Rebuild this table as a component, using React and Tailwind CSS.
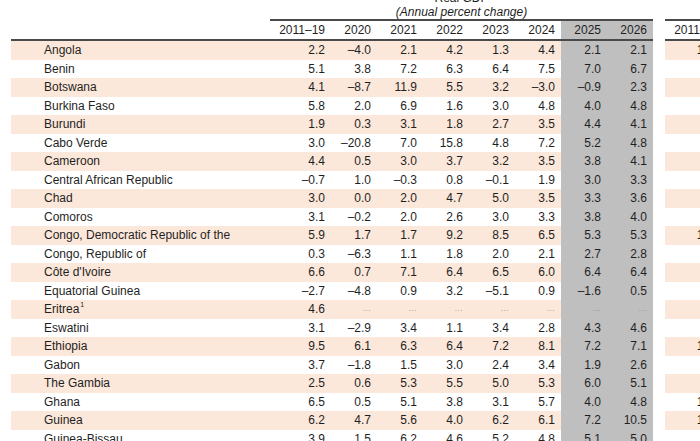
import React from "react";

const rows = [
  ["Angola", ["2.2", "–4.0", "2.1", "4.2", "1.3", "4.4", "2.1", "2.1"], "17.1"],
  ["Benin", ["5.1", "3.8", "7.2", "6.3", "6.4", "7.5", "7.0", "6.7"], "0.8"],
  ["Botswana", ["4.1", "–8.7", "11.9", "5.5", "3.2", "–3.0", "–0.9", "2.3"], "5.2"],
  ["Burkina Faso", ["5.8", "2.0", "6.9", "1.6", "3.0", "4.8", "4.0", "4.8"], "1.0"],
  ["Burundi", ["1.9", "0.3", "3.1", "1.8", "2.7", "3.5", "4.4", "4.1"], "8.3"],
  ["Cabo Verde", ["3.0", "–20.8", "7.0", "15.8", "4.8", "7.2", "5.2", "4.8"], "1.1"],
  ["Cameroon", ["4.4", "0.5", "3.0", "3.7", "3.2", "3.5", "3.8", "4.1"], "1.9"],
  ["Central African Republic", ["–0.7", "1.0", "–0.3", "0.8", "–0.1", "1.9", "3.0", "3.3"], "4.4"],
  ["Chad", ["3.0", "0.0", "2.0", "4.7", "5.0", "3.5", "3.3", "3.6"], "1.5"],
  ["Comoros", ["3.1", "–0.2", "2.0", "2.6", "3.0", "3.3", "3.8", "4.0"], "1.6"],
  ["Congo, Democratic Republic of the", ["5.9", "1.7", "1.7", "9.2", "8.5", "6.5", "5.3", "5.3"], "14.4"],
  ["Congo, Republic of", ["0.3", "–6.3", "1.1", "1.8", "2.0", "2.1", "2.7", "2.8"], "2.3"],
  ["Côte d'Ivoire", ["6.6", "0.7", "7.1", "6.4", "6.5", "6.0", "6.4", "6.4"], "1.3"],
  ["Equatorial Guinea", ["–2.7", "–4.8", "0.9", "3.2", "–5.1", "0.9", "–1.6", "0.5"], "2.2"],
  ["Eritrea", ["4.6", "...", "...", "...", "...", "...", "...", "..."], "3.4", true],
  ["Eswatini", ["3.1", "–2.9", "3.4", "1.1", "3.4", "2.8", "4.3", "4.6"], "5.6"],
  ["Ethiopia", ["9.5", "6.1", "6.3", "6.4", "7.2", "8.1", "7.2", "7.1"], "15.4"],
  ["Gabon", ["3.7", "–1.8", "1.5", "3.0", "2.4", "3.4", "1.9", "2.6"], "2.0"],
  ["The Gambia", ["2.5", "0.6", "5.3", "5.5", "5.0", "5.3", "6.0", "5.1"], "6.4"],
  ["Ghana", ["6.5", "0.5", "5.1", "3.8", "3.1", "5.7", "4.0", "4.8"], "12.6"],
  ["Guinea", ["6.2", "4.7", "5.6", "4.0", "6.2", "6.1", "7.2", "10.5"], "10.4"],
  ["Guinea-Bissau", ["3.9", "1.5", "6.2", "4.6", "5.2", "4.8", "5.1", "5.0"], "1.4"],
];

const years = ["2011–19", "2020", "2021", "2022", "2023", "2024", "2025", "2026"];

function Val({ v }) {
  if (v === "...") {
    return <span className="text-[8px] text-[#8a8a8a] tracking-[0.5px]">...</span>;
  }
  return <span>{v}</span>;
}

export default function App() {
  return (
    <div className="w-[700px] h-[441px] overflow-hidden bg-white flex pl-[11px] font-['Liberation_Sans',Arial,sans-serif] text-[12px] leading-[14px] text-[#1f1f1f]">
      {/* Main table */}
      <div className="w-[642px] shrink-0 flex flex-col">
        {/* Titles */}
        <div className="flex mt-[-9px] h-[28px] shrink-0">
          <div className="w-[259px] shrink-0" />
          <div className="w-[383px] flex flex-col items-center">
            <div>Real GDP</div>
            <div className="italic">(Annual percent change)</div>
          </div>
        </div>
        {/* Years header */}
        <div className="flex h-[22px] shrink-0">
          <div className="w-[259px] shrink-0 border-b-2 border-[#4a4a4a]" />
          {years.map((y, i) => (
            <div
              key={y}
              className={
                (i === 0 ? "w-[61px] " : "w-[46px] ") +
                (i >= 6 ? "bg-[#bfbfbf] " : "") +
                "shrink-0 border-t-2 border-b-2 border-[#4a4a4a] flex items-center justify-end pr-[6px]"
              }
            >
              {y}
            </div>
          ))}
        </div>
        {/* Body */}
        {rows.map(([name, vals, , sup], r) => (
          <div
            key={name}
            className={(r % 2 === 0 ? "bg-[#fce8da] " : "") + "flex h-[18.5px] shrink-0 items-center"}
          >
            <div className="w-[259px] shrink-0 pl-[33px] whitespace-nowrap">
              {name}
              {sup && <span className="text-[7px] leading-[7px] align-top relative top-[-1px] ml-[1px]">1</span>}
            </div>
            {vals.map((v, i) => (
              <div
                key={i}
                className={
                  (i === 0 ? "w-[61px] " : "w-[46px] ") +
                  (i >= 6 ? "bg-[#bfbfbf] " : "") +
                  "shrink-0 h-full flex items-center justify-end pr-[6px]"
                }
              >
                <Val v={v} />
              </div>
            ))}
          </div>
        ))}
      </div>

      {/* Second table (cut off) */}
      <div className="ml-[12px] w-[200px] shrink-0 flex flex-col">
        <div className="h-[19px] shrink-0" />
        <div className="flex h-[22px] shrink-0">
          <div className="w-[61px] shrink-0 border-t-2 border-b-2 border-[#4a4a4a] flex items-center justify-end pr-[6px]">
            2011–19
          </div>
          <div className="w-[139px] shrink-0 border-t-2 border-b-2 border-[#4a4a4a]" />
        </div>
        {rows.map(([name, , cp], r) => (
          <div
            key={name}
            className={(r % 2 === 0 ? "bg-[#fce8da] " : "") + "flex h-[18.5px] shrink-0 items-center"}
          >
            <div className="w-[61px] shrink-0 flex justify-end pr-[6px]">{cp}</div>
          </div>
        ))}
      </div>
    </div>
  );
}
